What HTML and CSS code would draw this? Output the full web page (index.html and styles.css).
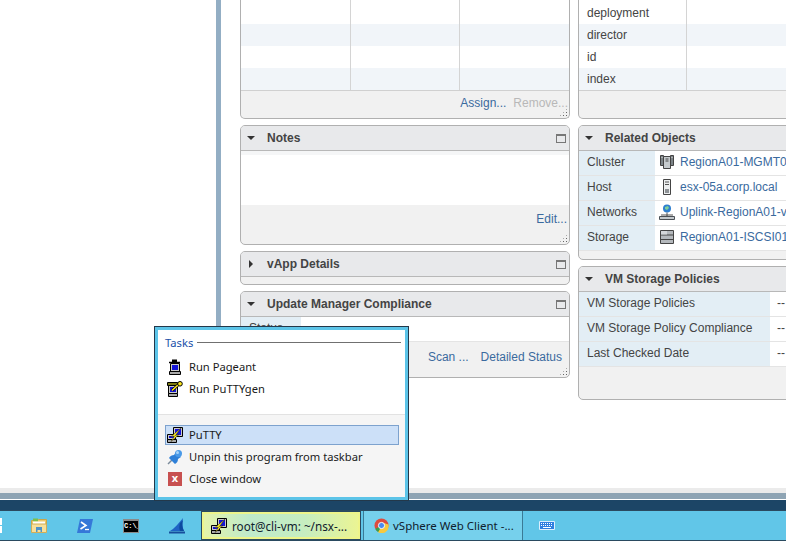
FILE: index.html
```html
<!DOCTYPE html>
<html>

<head>
    <meta charset="UTF-8">
    <title>vSphere Web Client</title>
    <link rel="stylesheet" href="styles.css">
</head>

<body>
    <svg class="iconDefs" width="0" height="0">
        <symbol id="putty" viewBox="0 0 16 16">
            <path d="M6.500.5h9v9h-9z" fill="#c8c8c8" stroke="#000"/>
            <path d="M8 2h6v6H8z" fill="#1414d8"/>
            <path d="M.5 7.500h8v5h-8z" fill="#c8c8c8" stroke="#000"/>
            <path d="M2 9h5v2H2z" fill="#1414d8"/>
            <path d="M.5 12.500h9v3h-9z" fill="#a8a8a8" stroke="#000"/>
            <path d="M14 1 3.500 10l4-1L4 14.500 12 7.500l-3.500 1z" fill="#ffee20" stroke="#000" stroke-width=".4"/>
        </symbol>
    </svg>

    <div class="workspace">
        <div class="sidePane"></div>
        <div class="splitter"></div>
        <div class="portlets">
            <div class="column leftColumn">
                <section class="portlet tagsPortlet">
                    <div class="grid threeCols">
                        <div class="gridRow"><i></i><i></i><i></i></div>
                        <div class="gridRow"><i></i><i></i><i></i></div>
                        <div class="gridRow"><i></i><i></i><i></i></div>
                        <div class="gridRow"><i></i><i></i><i></i></div>
                    </div>
                    <div class="actions tagActions">
                        <a>Assign...</a>
                        <a class="disabled">Remove...</a>
                    </div>
                    <span class="grip"></span>
                </section>
                <section class="portlet notesPortlet">
                    <header><span class="arrowDown"></span><h3>Notes</h3><span class="maxBtn"></span></header>
                    <div class="notesBody"></div>
                    <div class="actions"><a>Edit...</a></div>
                    <span class="grip"></span>
                </section>
                <section class="portlet vappPortlet">
                    <header><span class="arrowRight"></span><h3>vApp Details</h3><span class="maxBtn"></span></header>
                </section>
                <section class="portlet updatePortlet">
                    <header><span class="arrowDown"></span><h3>Update Manager Compliance</h3><span class="maxBtn"></span></header>
                    <div class="propRow"><label class="statusLabel">Status</label><span class="propValue statusValue">--</span></div>
                    <div class="actions"><a>Scan ...</a><a>Detailed Status</a></div>
                    <span class="grip"></span>
                </section>
            </div>
            <div class="column rightColumn">
                <section class="portlet metaPortlet">
                    <div class="grid twoCols">
                        <div class="gridRow"><i>deployment</i><i></i></div>
                        <div class="gridRow"><i>director</i><i></i></div>
                        <div class="gridRow"><i>id</i><i></i></div>
                        <div class="gridRow"><i>index</i><i></i></div>
                    </div>
                </section>
                <section class="portlet relatedPortlet">
                    <header><span class="arrowDown"></span><h3>Related Objects</h3></header>
                    <div class="propRow"><label>Cluster</label>
                        <span class="propValue objValue">
                            <svg class="objIcon" viewBox="0 0 16 16"><path d="M1.500 1.500h3v10h-3zM11.500 1.500h3v10h-3z" fill="#7d8488" stroke="#444"/><path d="M4.500 2.500h7v12h-7z" fill="#c6cbce" stroke="#444"/><path d="M6.500 5h3M6.500 7h3" stroke="#444"/><path d="M2.500 3.500h1M12.500 3.500h1" stroke="#ddd"/></svg>
                            <a>RegionA01-MGMT01</a>
                        </span>
                    </div>
                    <div class="propRow"><label>Host</label>
                        <span class="propValue objValue">
                            <svg class="objIcon" viewBox="0 0 16 16"><path d="M4.500.5h7v15h-7z" fill="#eceeef" stroke="#444"/><path d="M6 3h4M6 5.500h4" stroke="#555"/><path d="M6 10h4v4H6z" fill="#8e9296"/></svg>
                            <a>esx-05a.corp.local</a>
                        </span>
                    </div>
                    <div class="propRow"><label>Networks</label>
                        <span class="propValue objValue">
                            <svg class="objIcon" viewBox="0 0 16 16"><circle cx="8" cy="4.500" r="4" fill="#2f7fd0"/><path d="M6 3l3-1 1 2-2 2-2-1z" fill="#7fd09a"/><path d="M8 8.500v3" stroke="#555"/><path d="M2 11h12M8 11v1" stroke="#555"/><path d="M.5 12.500h15v3H.5z" fill="#c2c8cc" stroke="#4a5056"/></svg>
                            <a>Uplink-RegionA01-vDS</a>
                        </span>
                    </div>
                    <div class="propRow"><label>Storage</label>
                        <span class="propValue objValue">
                            <svg class="objIcon" viewBox="0 0 16 16"><path d="M1.500 1.500h13v13h-13z" fill="#b4b8bc" stroke="#444"/><path d="M1.500 6h13M1.500 10.500h13" stroke="#444"/><path d="M2 2h6v3.500H2z" fill="#d4d7da"/></svg>
                            <a>RegionA01-ISCSI01</a>
                        </span>
                    </div>
                </section>
                <section class="portlet policyPortlet">
                    <header><span class="arrowDown"></span><h3>VM Storage Policies</h3></header>
                    <div class="propRow wideLabel"><label>VM Storage Policies</label><span class="propValue">--</span></div>
                    <div class="propRow wideLabel"><label>VM Storage Policy Compliance</label><span class="propValue">--</span></div>
                    <div class="propRow wideLabel"><label>Last Checked Date</label><span class="propValue">--</span></div>
                </section>
            </div>
        </div>
    </div>

    <div class="hScroll"></div>
    <div class="statusBar"></div>

    <div class="taskbar">
        <div class="startSliver"></div>
        <div class="pin">
            <svg width="16" height="15" viewBox="0 0 16 15"><path d="M.5 2.500h6l1-1h8v12H.5z" fill="#eec868" stroke="#c9a64a"/><path d="M2 .5h5v3H2z" fill="#7cc04a"/><path d="M2 3.500h12v3H2z" fill="#fff"/><path d="M.5 6h15v8.500H.5z" fill="#f7df9a" stroke="#d0ae58"/><path d="M5 9h6v5H9.500v-2h-3v2H5z" fill="#4f93c8"/></svg>
        </div>
        <div class="pin">
            <svg width="16" height="14" viewBox="0 0 16 14"><path d="M3 0h13l-3 14H0z" fill="#3578d8"/><path d="m4 3 5 3.500L3.500 10" fill="none" stroke="#fff" stroke-width="1.600"/><path d="M8 10.500h4" stroke="#fff" stroke-width="1.300"/></svg>
        </div>
        <div class="pin">
            <span class="cmdBox">C:\_</span>
        </div>
        <div class="pin">
            <svg width="16" height="17" viewBox="0 0 16 17"><path d="M1 14C5 12 9 7 14 1c-1 4-1 9 1 13z" fill="#1f63c4"/><path d="M0 14.500h16v2H0z" fill="#174e9c"/><path d="M11 6c-1 3-1 6 0 8h4c-2-3-2-7-1-11z" fill="#0d4a9e"/></svg>
        </div>
        <div class="taskBtn puttyBtn">
            <svg class="taskIcon"><use href="#putty"/></svg>
            <span>root@cli-vm: ~/nsx-...</span>
        </div>
        <div class="taskBtn chromeBtn">
            <svg class="chromeIcon" viewBox="0 0 16 16"><circle cx="8" cy="8" r="7.500" fill="#dd4b3e"/><path d="M8 8 1.500 11.700A7.500 7.500 0 0 0 8 15.500z" fill="#3a9f4f"/><path d="M8 8 4 15A7.500 7.500 0 0 0 15.400 7L8 4.500z" fill="#f7c93e"/><path d="M8 8 1.500 11.700 4.400 15 8 9z" fill="#3a9f4f"/><circle cx="8" cy="8" r="3.300" fill="#4a8af0" stroke="#fff"/></svg>
            <span>vSphere Web Client -...</span>
        </div>
        <div class="pin keyboardPin">
            <svg width="16" height="9" viewBox="0 0 16 9"><path d="M.5.500h15v8H.5z" fill="#2f7fe0" stroke="#dcefff"/><path d="M2 2.500h12M2 4.500h12" stroke="#fff" stroke-dasharray="1 1"/><path d="M4 6.500h8" stroke="#fff"/></svg>
        </div>
    </div>

    <div class="jumpList">
        <div class="jumpTop">
            <div class="jumpTitle"><span>Tasks</span><hr></div>
            <div class="jumpItem">
                <svg class="jumpIcon" viewBox="0 0 16 16"><path d="M2 3.500h11" stroke="#000" stroke-width="1.500"/><path d="M5 .5h5v3H5z" fill="#000"/><path d="M3.500 4.500h9v8h-9z" fill="#c8c8c8" stroke="#000"/><path d="M5 6h6v5H5z" fill="#1414d8"/><path d="M2.500 12.500h11v3h-11z" fill="#a8a8a8" stroke="#000"/></svg>
                <span>Run Pageant</span>
            </div>
            <div class="jumpItem">
                <svg class="jumpIcon" viewBox="0 0 16 16"><path d="M.5 1.500h10v3H.5z" fill="#7c7a10" stroke="#000"/><path d="M1.500 4.500h9v8h-9z" fill="#c8c8c8" stroke="#000"/><path d="M3 6h6v5H3z" fill="#1414d8"/><path d="M11 4 5 9.500" stroke="#000" stroke-width="3"/><path d="M11 4 5 9.500" stroke="#ffe820" stroke-width="1.600"/><circle cx="13" cy="2.800" r="2.300" fill="#ffe820" stroke="#000"/><path d="M1.500 12.500h9v3h-9z" fill="#a8a8a8" stroke="#000"/></svg>
                <span>Run PuTTYgen</span>
            </div>
        </div>
        <div class="jumpBottom">
            <div class="jumpItem selected">
                <svg class="jumpIcon"><use href="#putty"/></svg>
                <span>PuTTY</span>
            </div>
            <div class="jumpItem">
                <svg class="jumpIcon" viewBox="0 0 16 16"><path d="m1 15 4-4" stroke="#7a8a9a" stroke-width="1.500"/><path d="M2 9c1-2 3-3 5-3l2-3 5 5-3 2c0 2-1 4-3 5z" fill="#2f80d8"/><circle cx="11.500" cy="4.500" r="3.500" fill="#4a9ae8"/><circle cx="10.500" cy="3.500" r="1.500" fill="#a8d4f8"/></svg>
                <span>Unpin this program from taskbar</span>
            </div>
            <div class="jumpItem">
                <span class="closeIcon">x</span>
                <span>Close window</span>
            </div>
        </div>
    </div>
</body>

</html>
```
FILE: styles.css
```css
html, body {
    margin: 0;
    height: 100%;
}
body {
    width: 786px;
    height: 541px;
    overflow: hidden;
    position: relative;
    display: flex;
    flex-direction: column;
    background: #ffffff;
    font-family: "Liberation Sans", Arial, sans-serif;
    font-size: 12px;
    color: #444444;
}
.iconDefs {
    position: absolute;
}
.workspace {
    height: 488px;
    display: flex;
    overflow: hidden;
    flex-shrink: 0;
}
.sidePane {
    width: 216px;
    flex-shrink: 0;
}
.splitter {
    width: 5px;
    flex-shrink: 0;
    background: #93aec4;
}
.portlets {
    display: flex;
    gap: 8px;
    padding-left: 19px;
    width: 600px;
    flex-shrink: 0;
}
.column {
    display: flex;
    flex-direction: column;
    flex-shrink: 0;
}
.leftColumn {
    width: 330px;
}
.rightColumn {
    width: 300px;
}
.portlet {
    position: relative;
    box-sizing: border-box;
    border: 1px solid #b0b0b0;
    border-radius: 5px;
    background: #f1f1f1;
    margin-bottom: 6px;
    overflow: hidden;
    flex-shrink: 0;
}
.portlet header {
    box-sizing: border-box;
    height: 25px;
    display: flex;
    align-items: center;
    background: #e8e9eb;
    border-bottom: 1px solid #b8b8b8;
    padding-left: 6px;
}
.portlet h3 {
    margin: 0;
    font-size: 12px;
    font-weight: bold;
    color: #444444;
    flex: 1;
}
.arrowDown, .arrowRight {
    width: 0;
    height: 0;
    border-style: solid;
}
.arrowDown {
    border-width: 4px 4px 0 4px;
    border-color: #333333 transparent transparent transparent;
    margin-right: 12px;
}
.arrowRight {
    border-width: 4px 0 4px 4px;
    border-color: transparent transparent transparent #333333;
    margin-left: 2px;
    margin-right: 14px;
}
.maxBtn {
    box-sizing: border-box;
    width: 10px;
    height: 9px;
    border: 1px solid #777777;
    border-top-width: 2px;
    margin-right: 3px;
}
.tagsPortlet, .metaPortlet {
    border-top: 0;
    border-radius: 0 0 5px 5px;
    height: 119px;
}
.grid {
    border-bottom: 1px solid #d0d0d0;
    height: 91px;
    box-sizing: border-box;
    background: #ffffff;
}
.gridRow {
    display: flex;
    height: 22px;
}
.gridRow:nth-child(even) {
    background: #f1f5f9;
}
.gridRow:first-child {
    height: 24px;
}
.gridRow i {
    box-sizing: border-box;
    font-style: normal;
    padding: 4px 0 0 8px;
    line-height: 14px;
}
.gridRow:first-child i {
    padding-top: 6px;
}
.threeCols i:nth-child(1) {
    width: 110px;
    border-right: 1px solid #d4d4d4;
}
.threeCols i:nth-child(2) {
    width: 109px;
    border-right: 1px solid #d4d4d4;
}
.twoCols i:first-child {
    width: 108px;
    border-right: 1px solid #d4d4d4;
}
.actions {
    height: 28px;
    display: flex;
    justify-content: flex-end;
    align-items: center;
    gap: 7px;
    padding-right: 2px;
    background: #f1f1f1;
}
.tagActions {
    height: 24px;
    padding-right: 1px;
}
.actions a, .propValue a {
    color: #3a6a9e;
}
.actions a.disabled {
    color: #b8b8b8;
}
.grip {
    position: absolute;
    right: 1px;
    bottom: 1px;
    width: 9px;
    height: 9px;
    background: radial-gradient(circle, #666666 0.7px, transparent 0.8px) 0 0 / 3px 3px;
    clip-path: polygon(100% 0, 100% 100%, 0 100%);
}
.notesPortlet {
    height: 120px;
}
.notesBody {
    height: 54px;
    box-sizing: border-box;
    background: #ffffff;
    border-top: 4px solid #f5f6f7;
}
.vappPortlet {
    height: 34px;
}
.updatePortlet {
    height: 87px;
}
.updatePortlet .actions {
    height: 30px;
    gap: 12px;
    padding-right: 7px;
}
.propRow {
    display: flex;
    height: 25px;
    box-sizing: border-box;
    border-bottom: 1px solid #e4e4e4;
    background: #ffffff;
}
.propRow label {
    width: 76px;
    flex-shrink: 0;
    box-sizing: border-box;
    padding-left: 8px;
    line-height: 22px;
    background: #e3eef5;
}
.propRow .statusLabel {
    width: 60px;
}
.propValue {
    display: flex;
    align-items: center;
    padding-left: 10px;
    padding-bottom: 2px;
    white-space: nowrap;
}
.statusValue {
    padding-bottom: 7px;
}
.objValue {
    padding-left: 4px;
}
.objIcon {
    width: 16px;
    height: 16px;
    margin-right: 5px;
    flex-shrink: 0;
}
.relatedPortlet {
    height: 135px;
}
.policyPortlet {
    height: 134px;
}
.wideLabel label {
    width: 191px;
}
.wideLabel .propValue {
    padding-left: 7px;
}
.hScroll {
    height: 5px;
    background: #ebebeb;
    flex-shrink: 0;
}
.statusBar {
    height: 17px;
    flex-shrink: 0;
    background: linear-gradient(#8ea4b4 0 6px, #ffffff 6px 7px, #1c4566 7px);
}
.taskbar {
    height: 31px;
    flex-shrink: 0;
    box-sizing: border-box;
    display: flex;
    align-items: center;
    background: #61c6e8;
    border-top: 1px solid #2a4a60;
    border-bottom: 1px solid #2a4a60;
}
.startSliver {
    width: 2px;
    height: 15px;
    margin-right: 14px;
    flex-shrink: 0;
    background: linear-gradient(#ffffff 0 7px, transparent 7px 8px, #ffffff 8px);
}
.pin {
    width: 46px;
    display: flex;
    justify-content: center;
    align-items: center;
    flex-shrink: 0;
}
.cmdBox {
    box-sizing: border-box;
    width: 16px;
    height: 14px;
    border: 1px solid #8a8a8a;
    border-top-width: 2px;
    background: #000000;
    color: #ffffff;
    font-family: "Liberation Mono", monospace;
    font-size: 7px;
    font-weight: bold;
    line-height: 11px;
    text-align: center;
    white-space: nowrap;
    overflow: hidden;
}
.taskBtn {
    box-sizing: border-box;
    height: 29px;
    display: flex;
    align-items: center;
    flex-shrink: 0;
    font-family: "Noto Sans", sans-serif;
    font-size: 11.5px;
    color: #10202c;
    white-space: nowrap;
}
.taskIcon {
    width: 16px;
    height: 16px;
}
.chromeIcon {
    width: 15px;
    height: 15px;
}
.puttyBtn {
    width: 160px;
    margin-left: 1px;
    padding-left: 9px;
    gap: 5px;
    font-size: 11.7px;
    border: 1px solid #2a4a60;
    background: linear-gradient(90deg, #e6f4a8, #bfeacb 30%, #c6edc0 65%, #ecf592);
    box-shadow: inset 0 0 0 2px #eef58a;
}
.chromeBtn {
    width: 160px;
    margin-left: 2px;
    padding-left: 10px;
    gap: 4px;
    background: #76d0ec;
    border-left: 1px solid #3a7a96;
    border-right: 1px solid #3a7a96;
}
.keyboardPin {
    width: 48px;
}
.jumpList {
    position: absolute;
    left: 154px;
    top: 326px;
    width: 255px;
    height: 175px;
    box-sizing: border-box;
    border: 1px solid #23384a;
    background: #ffffff;
    box-shadow: inset 0 0 0 3px #5cc4e8;
    padding: 3px;
    display: flex;
    flex-direction: column;
    font-family: "Noto Sans", sans-serif;
    font-size: 11.2px;
    color: #1a1a1a;
}
.jumpTop {
    box-sizing: border-box;
    height: 84px;
    flex-shrink: 0;
    padding: 3px 4px 0 7px;
}
.jumpTitle {
    display: flex;
    align-items: center;
    gap: 4px;
    height: 18px;
    color: #2050a8;
    margin-bottom: 5px;
}
.jumpTitle hr {
    flex: 1;
    margin: 0;
    border: 0;
    border-top: 1px solid #707070;
}
.jumpBottom {
    flex: 1;
    background: #f5f5f5;
    border-top: 1px solid #e2e2e2;
    padding: 10px 6px 0 7px;
}
.jumpItem {
    box-sizing: border-box;
    height: 22px;
    display: flex;
    align-items: center;
    gap: 6px;
    padding-left: 2px;
}
.jumpItem span:last-child {
    margin-bottom: 2px;
}
.jumpItem.selected {
    height: 20px;
    margin-bottom: 1px;
    background: #cce0f8;
    border: 1px solid #7da2ce;
    padding-left: 1px;
}
.jumpIcon {
    width: 16px;
    height: 16px;
    flex-shrink: 0;
}
.closeIcon {
    box-sizing: border-box;
    width: 14px;
    height: 14px;
    margin: 0 1px;
    background: #c75050;
    color: #ffffff;
    font-weight: bold;
    font-size: 11px;
    line-height: 12px;
    text-align: center;
}
```
